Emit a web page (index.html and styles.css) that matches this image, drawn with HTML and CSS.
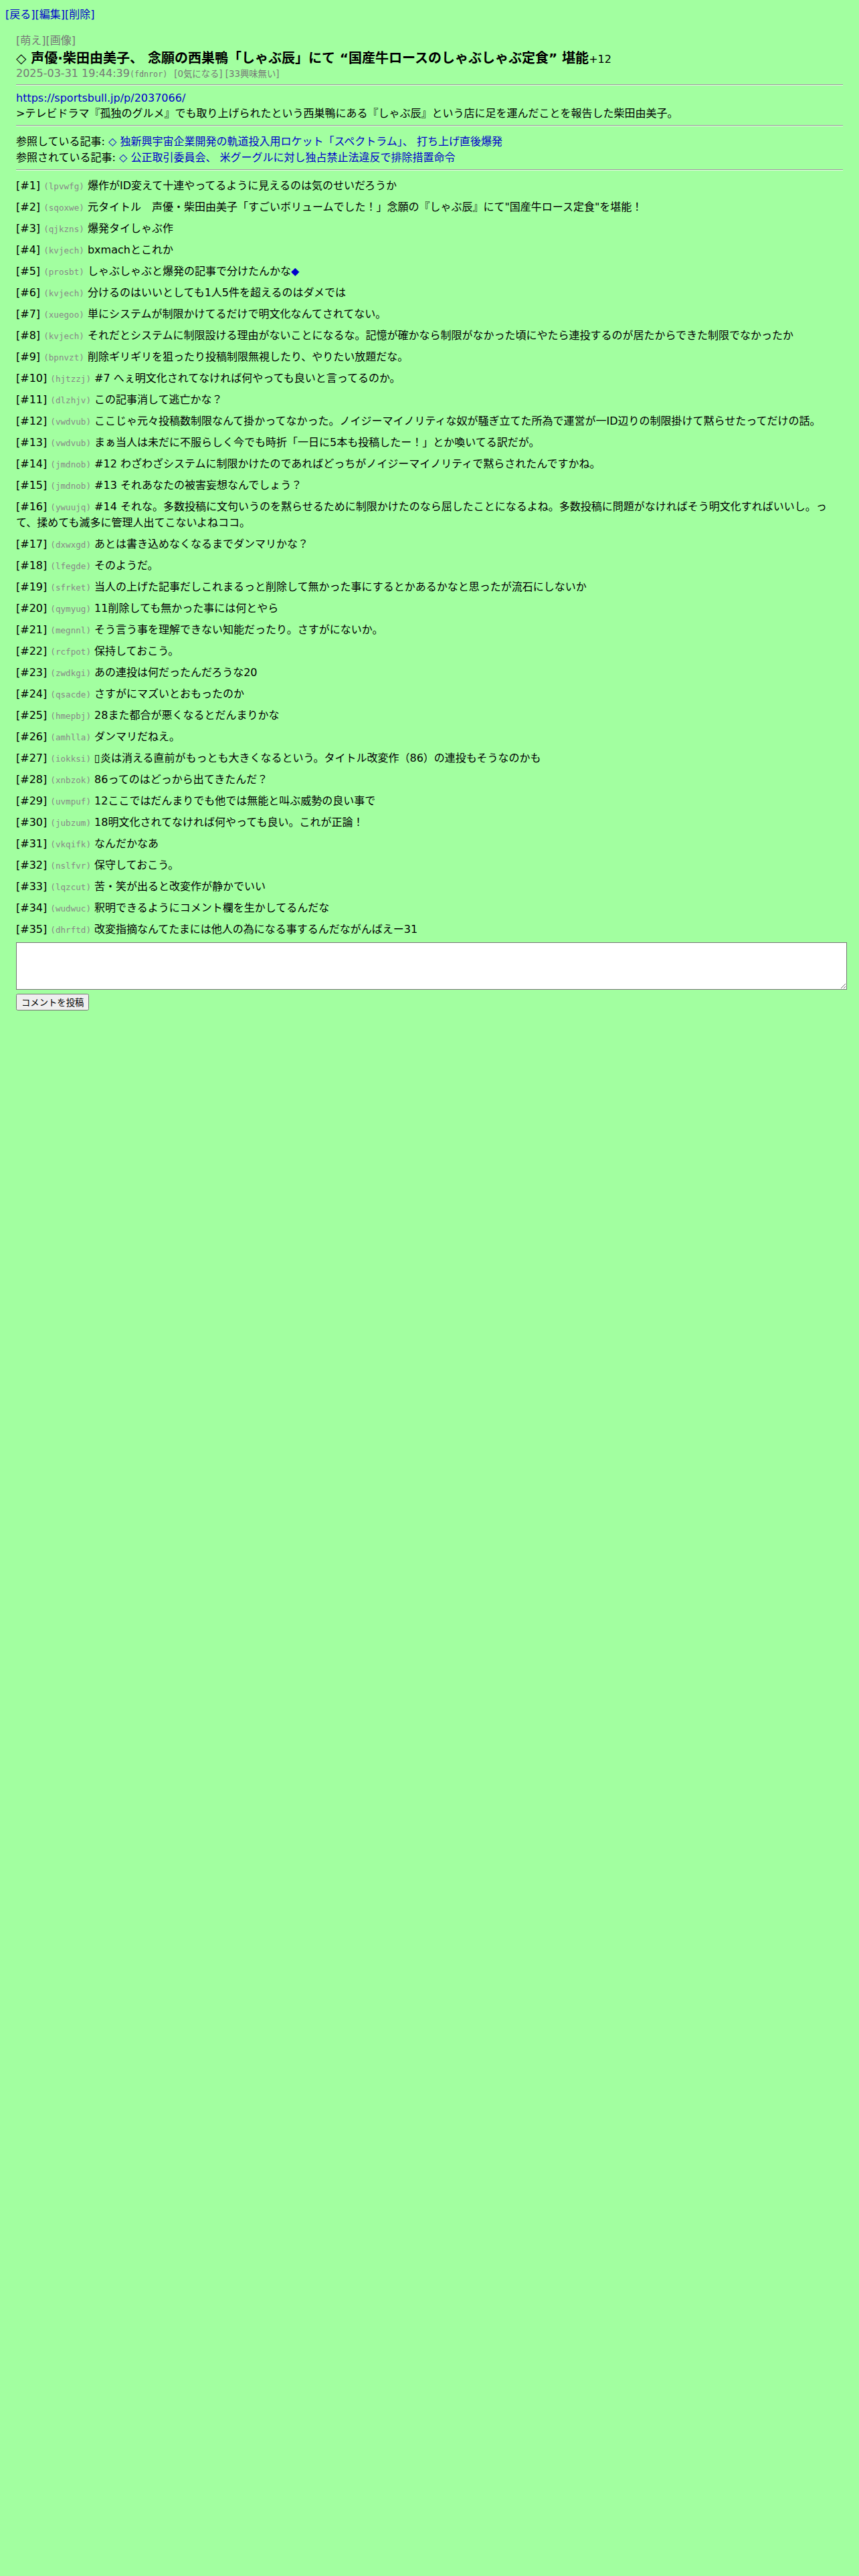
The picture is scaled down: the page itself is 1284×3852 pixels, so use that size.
FILE: index.html
```html
<!DOCTYPE html>
<html lang="ja">
<head>
<meta charset="utf-8">
<title>声優・柴田由美子、念願の西巣鴨「しゃぶ辰」にて“国産牛ロースのしゃぶしゃぶ定食”堪能</title>
<link rel="stylesheet" href="styles.css">
</head>
<body>
<div class="nav"><a class="nav-link" href="#">[戻る]</a><a class="nav-link" href="#">[編集]</a><a class="nav-link" href="#">[削除]</a></div>
<div class="article">
  <div class="tags">[萌え][画像]</div>
  <div class="title"><span class="title-text">◇ 声優·柴田由美子、 念願の西巣鴨「しゃぶ辰」にて “国産牛ロースのしゃぶしゃぶ定食” 堪能</span><span class="score">+12</span></div>
  <div class="meta"><span class="date">2025-03-31 19:44:39</span><span class="uid">(fdnror)</span> <span class="votes">[0気になる] [33興味無い]</span></div>
  <hr class="rule">
  <div class="body"><a class="link" href="#">https://sportsbull.jp/p/2037066/</a><br>&gt;テレビドラマ『孤独のグルメ』でも取り上げられたという西巣鴨にある『しゃぶ辰』という店に足を運んだことを報告した柴田由美子。</div>
  <hr class="rule">
  <div class="refs">
    <div class="ref">参照している記事: <a class="link" href="#">◇ 独新興宇宙企業開発の軌道投入用ロケット「スペクトラム」、 打ち上げ直後爆発</a></div>
    <div class="ref">参照されている記事: <a class="link" href="#">◇ 公正取引委員会、 米グーグルに対し独占禁止法違反で排除措置命令</a></div>
  </div>
  <hr class="rule">
  <div class="comments">
    <div class="comment"><span class="num">[#1]</span> <span class="cid">(lpvwfg)</span> 爆作がID変えて十連やってるように見えるのは気のせいだろうか</div>
    <div class="comment"><span class="num">[#2]</span> <span class="cid">(sqoxwe)</span> 元タイトル　声優・柴田由美子「すごいボリュームでした！」念願の『しゃぶ辰』にて"国産牛ロース定食"を堪能！</div>
    <div class="comment"><span class="num">[#3]</span> <span class="cid">(qjkzns)</span> 爆発タイしゃぶ作</div>
    <div class="comment"><span class="num">[#4]</span> <span class="cid">(kvjech)</span> bxmachとこれか</div>
    <div class="comment"><span class="num">[#5]</span> <span class="cid">(prosbt)</span> しゃぶしゃぶと爆発の記事で分けたんかな<a class="link" href="#">◆</a></div>
    <div class="comment"><span class="num">[#6]</span> <span class="cid">(kvjech)</span> 分けるのはいいとしても1人5件を超えるのはダメでは</div>
    <div class="comment"><span class="num">[#7]</span> <span class="cid">(xuegoo)</span> 単にシステムが制限かけてるだけで明文化なんてされてない。</div>
    <div class="comment"><span class="num">[#8]</span> <span class="cid">(kvjech)</span> それだとシステムに制限設ける理由がないことになるな。記憶が確かなら制限がなかった頃にやたら連投するのが居たからできた制限でなかったか</div>
    <div class="comment"><span class="num">[#9]</span> <span class="cid">(bpnvzt)</span> 削除ギリギリを狙ったり投稿制限無視したり、やりたい放題だな。</div>
    <div class="comment"><span class="num">[#10]</span> <span class="cid">(hjtzzj)</span> #7 へぇ明文化されてなければ何やっても良いと言ってるのか。</div>
    <div class="comment"><span class="num">[#11]</span> <span class="cid">(dlzhjv)</span> この記事消して逃亡かな？</div>
    <div class="comment"><span class="num">[#12]</span> <span class="cid">(vwdvub)</span> ここじゃ元々投稿数制限なんて掛かってなかった。ノイジーマイノリティな奴が騒ぎ立てた所為で運営が一ID辺りの制限掛けて黙らせたってだけの話。</div>
    <div class="comment"><span class="num">[#13]</span> <span class="cid">(vwdvub)</span> まぁ当人は未だに不服らしく今でも時折「一日に5本も投稿したー！」とか喚いてる訳だが。</div>
    <div class="comment"><span class="num">[#14]</span> <span class="cid">(jmdnob)</span> #12 わざわざシステムに制限かけたのであればどっちがノイジーマイノリティで黙らされたんですかね。</div>
    <div class="comment"><span class="num">[#15]</span> <span class="cid">(jmdnob)</span> #13 それあなたの被害妄想なんでしょう？</div>
    <div class="comment"><span class="num">[#16]</span> <span class="cid">(ywuujq)</span> #14 それな。多数投稿に文句いうのを黙らせるために制限かけたのなら屈したことになるよね。多数投稿に問題がなければそう明文化すればいいし。って、揉めても滅多に管理人出てこないよねココ。</div>
    <div class="comment"><span class="num">[#17]</span> <span class="cid">(dxwxgd)</span> あとは書き込めなくなるまでダンマリかな？</div>
    <div class="comment"><span class="num">[#18]</span> <span class="cid">(lfegde)</span> そのようだ。</div>
    <div class="comment"><span class="num">[#19]</span> <span class="cid">(sfrket)</span> 当人の上げた記事だしこれまるっと削除して無かった事にするとかあるかなと思ったが流石にしないか</div>
    <div class="comment"><span class="num">[#20]</span> <span class="cid">(qymyug)</span> 11削除しても無かった事には何とやら</div>
    <div class="comment"><span class="num">[#21]</span> <span class="cid">(megnnl)</span> そう言う事を理解できない知能だったり。さすがにないか。</div>
    <div class="comment"><span class="num">[#22]</span> <span class="cid">(rcfpot)</span> 保持しておこう。</div>
    <div class="comment"><span class="num">[#23]</span> <span class="cid">(zwdkgi)</span> あの連投は何だったんだろうな20</div>
    <div class="comment"><span class="num">[#24]</span> <span class="cid">(qsacde)</span> さすがにマズいとおもったのか</div>
    <div class="comment"><span class="num">[#25]</span> <span class="cid">(hmepbj)</span> 28また都合が悪くなるとだんまりかな</div>
    <div class="comment"><span class="num">[#26]</span> <span class="cid">(amhlla)</span> ダンマリだねえ。</div>
    <div class="comment"><span class="num">[#27]</span> <span class="cid">(iokksi)</span> ▯炎は消える直前がもっとも大きくなるという。タイトル改変作（86）の連投もそうなのかも</div>
    <div class="comment"><span class="num">[#28]</span> <span class="cid">(xnbzok)</span> 86ってのはどっから出てきたんだ？</div>
    <div class="comment"><span class="num">[#29]</span> <span class="cid">(uvmpuf)</span> 12ここではだんまりでも他では無能と叫ぶ威勢の良い事で</div>
    <div class="comment"><span class="num">[#30]</span> <span class="cid">(jubzum)</span> 18明文化されてなければ何やっても良い。これが正論！</div>
    <div class="comment"><span class="num">[#31]</span> <span class="cid">(vkqifk)</span> なんだかなあ</div>
    <div class="comment"><span class="num">[#32]</span> <span class="cid">(nslfvr)</span> 保守しておこう。</div>
    <div class="comment"><span class="num">[#33]</span> <span class="cid">(lqzcut)</span> 苦・笑が出ると改変作が静かでいい</div>
    <div class="comment"><span class="num">[#34]</span> <span class="cid">(wudwuc)</span> 釈明できるようにコメント欄を生かしてるんだな</div>
    <div class="comment"><span class="num">[#35]</span> <span class="cid">(dhrftd)</span> 改変指摘なんてたまには他人の為になる事するんだながんばえー31</div>
  </div>
  <form class="post"><textarea class="post-input"></textarea><button type="button" class="post-button">コメントを投稿</button></form>
</div>
</body>
</html>
```

FILE: styles.css
```css
html {
  background: #a2ffa0;
}
body {
  margin: 8px;
  background: #a2ffa0;
  color: #000;
  font-family: "DejaVu Sans", "Noto Sans CJK JP", sans-serif;
  font-size: 16px;
  line-height: normal;
}
a {
  color: #0000cc;
  text-decoration: none;
}
.nav {
  margin: 0;
}
.article {
  margin: 15px 16px 0;
}
.tags {
  color: #777;
}
.title {
  font-size: 20px;
}
.title-text {
  font-weight: bold;
}
.score {
  font-size: 16px;
}
.meta {
  color: #777;
}
.uid {
  font-family: "DejaVu Sans Mono", "Noto Sans CJK JP", monospace;
  font-size: 11.7px;
  margin-right: 5px;
}
.votes {
  font-size: 13.33px;
}
.rule {
  height: 0;
  border: 0;
  border-top: 1px solid #9a9a9a;
  border-bottom: 1px solid #e6f7e4;
  margin: 7px 0 9px;
}
.refs {
  margin: 0;
}
.comments {
  margin: 0;
}
.comment {
  margin: 0 0 8px;
}
.cid {
  font-family: "DejaVu Sans Mono", "Noto Sans CJK JP", monospace;
  font-size: 12.6px;
  color: #888;
}
.post {
  padding-top: 1px;
  margin: 0;
}
.post-input {
  display: block;
  width: 100%;
  height: 65px;
  margin: 0;
  padding: 2px;
  border: 1px solid #767676;
  background: #fff;
  font-family: "DejaVu Sans Mono", monospace;
  font-size: 13.33px;
}
.post-button {
  display: block;
  margin-top: 6px;
  font-family: "DejaVu Sans", "Noto Sans CJK JP", sans-serif;
  font-size: 13.33px;
}
```
